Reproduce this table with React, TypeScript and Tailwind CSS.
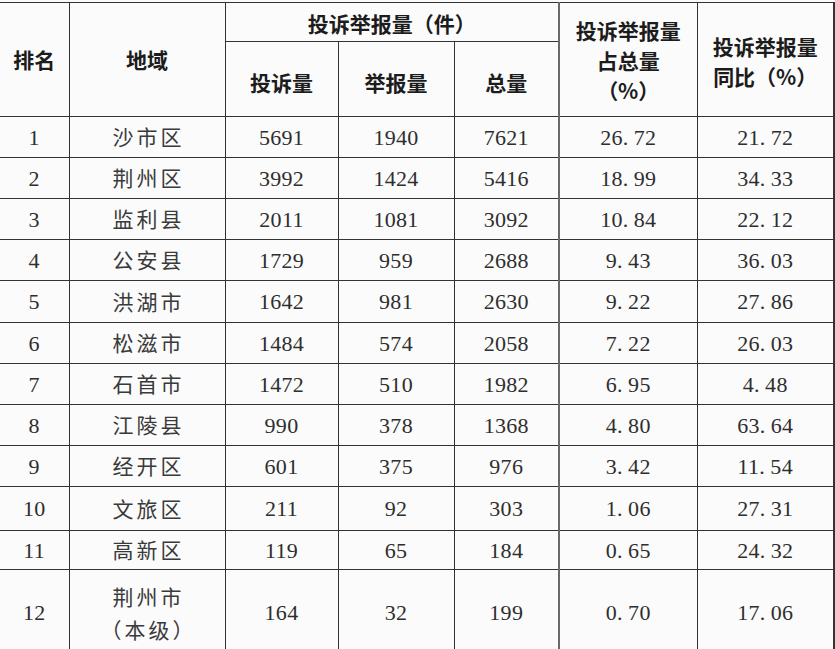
import React from 'react';

// 排名 / 地域 / 投诉量 / 举报量 / 总量 / 占总量 / 同比
type Row = [string, string, string, string, string, string, string];

const rows: Row[] = [
  ['1', '沙市区', '5691', '1940', '7621', '26.72', '21.72'],
  ['2', '荆州区', '3992', '1424', '5416', '18.99', '34.33'],
  ['3', '监利县', '2011', '1081', '3092', '10.84', '22.12'],
  ['4', '公安县', '1729', '959', '2688', '9.43', '36.03'],
  ['5', '洪湖市', '1642', '981', '2630', '9.22', '27.86'],
  ['6', '松滋市', '1484', '574', '2058', '7.22', '26.03'],
  ['7', '石首市', '1472', '510', '1982', '6.95', '4.48'],
  ['8', '江陵县', '990', '378', '1368', '4.80', '63.64'],
  ['9', '经开区', '601', '375', '976', '3.42', '11.54'],
  ['10', '文旅区', '211', '92', '303', '1.06', '27.31'],
  ['11', '高新区', '119', '65', '184', '0.65', '24.32'],
];

// 每行高度（最后几行略有不同）
const rowHeights = [
  'h-[41px]', 'h-[41px]', 'h-[41px]', 'h-[41px]', 'h-[42px]', 'h-[41px]',
  'h-[41px]', 'h-[41px]', 'h-[41px]', 'h-[44px]', 'h-[39px]',
];

const cell = 'border border-[#333] p-0 text-center align-middle';
const head = `${cell} font-['Noto_Sans_CJK_SC',sans-serif] font-bold text-[21px] text-[#1c1c1c]`;
const num = `${cell} font-['Liberation_Serif','Noto_Sans_CJK_SC',serif] text-[22px] text-[#2e2e2e] tracking-[0.3px]`;
const zh = `${cell} font-['Noto_Sans_CJK_SC',sans-serif] text-[21px] text-[#3a3a3a] tracking-[3px] pl-[3px]`;

// 小数点按宋体半角宽度显示
function Num({ v }: { v: string }) {
  const [a, b] = v.split('.');
  if (b === undefined) return <>{v}</>;
  return (
    <>
      {a}
      <span className="inline-block w-[11px] text-left">.</span>
      {b}
    </>
  );
}

export default function App() {
  return (
    <div className="w-[835px] h-[649px] overflow-hidden bg-[#fbfbfb] pt-[2px]">
      <table className="w-[834px] table-fixed border-collapse border-l-0">
        <colgroup>
          <col className="w-[69px]" />
          <col className="w-[156px]" />
          <col className="w-[113px]" />
          <col className="w-[116px]" />
          <col className="w-[105px]" />
          <col className="w-[138px]" />
          <col className="w-[137px]" />
        </colgroup>
        <thead>
          <tr className="h-[39px]">
            <th rowSpan={2} className={`${head} border-l-0`}>排名</th>
            <th rowSpan={2} className={head}>地域</th>
            <th colSpan={3} className={`${head} pt-[4px]`}>投诉举报量（件）</th>
            <th rowSpan={2} className={`${head} border-l-2 border-l-[#6a6a6a] leading-[30px]`}>
              投诉举报量
              <br />
              占总量
              <br />
              （%）
            </th>
            <th rowSpan={2} className={`${head} border-r-2 leading-[30px] pt-[2px]`}>
              投诉举报量
              <br />
              同比（%）
            </th>
          </tr>
          <tr className="h-[75px]">
            <th className={`${head} pt-[8px]`}>投诉量</th>
            <th className={`${head} pt-[8px]`}>举报量</th>
            <th className={`${head} pt-[8px]`}>总量</th>
          </tr>
        </thead>
        <tbody>
          {rows.map((r, i) => (
            <tr key={r[0]} className={rowHeights[i]}>
              <td className={`${num} border-l-0`}>{r[0]}</td>
              <td className={zh}>{r[1]}</td>
              <td className={num}>{r[2]}</td>
              <td className={num}>{r[3]}</td>
              <td className={num}>{r[4]}</td>
              <td className={`${num} border-l-2 border-l-[#6a6a6a]`}>
                <Num v={r[5]} />
              </td>
              <td className={`${num} border-r-2`}>
                <Num v={r[6]} />
              </td>
            </tr>
          ))}
          <tr className="h-[86px]">
            <td className={`${num} border-l-0`}>12</td>
            <td className={`${zh} leading-[33px]`}>
              荆州市
              <br />
              （本级）
            </td>
            <td className={num}>164</td>
            <td className={num}>32</td>
            <td className={num}>199</td>
            <td className={`${num} border-l-2 border-l-[#6a6a6a]`}>
              <Num v="0.70" />
            </td>
            <td className={`${num} border-r-2`}>
              <Num v="17.06" />
            </td>
          </tr>
        </tbody>
      </table>
    </div>
  );
}
